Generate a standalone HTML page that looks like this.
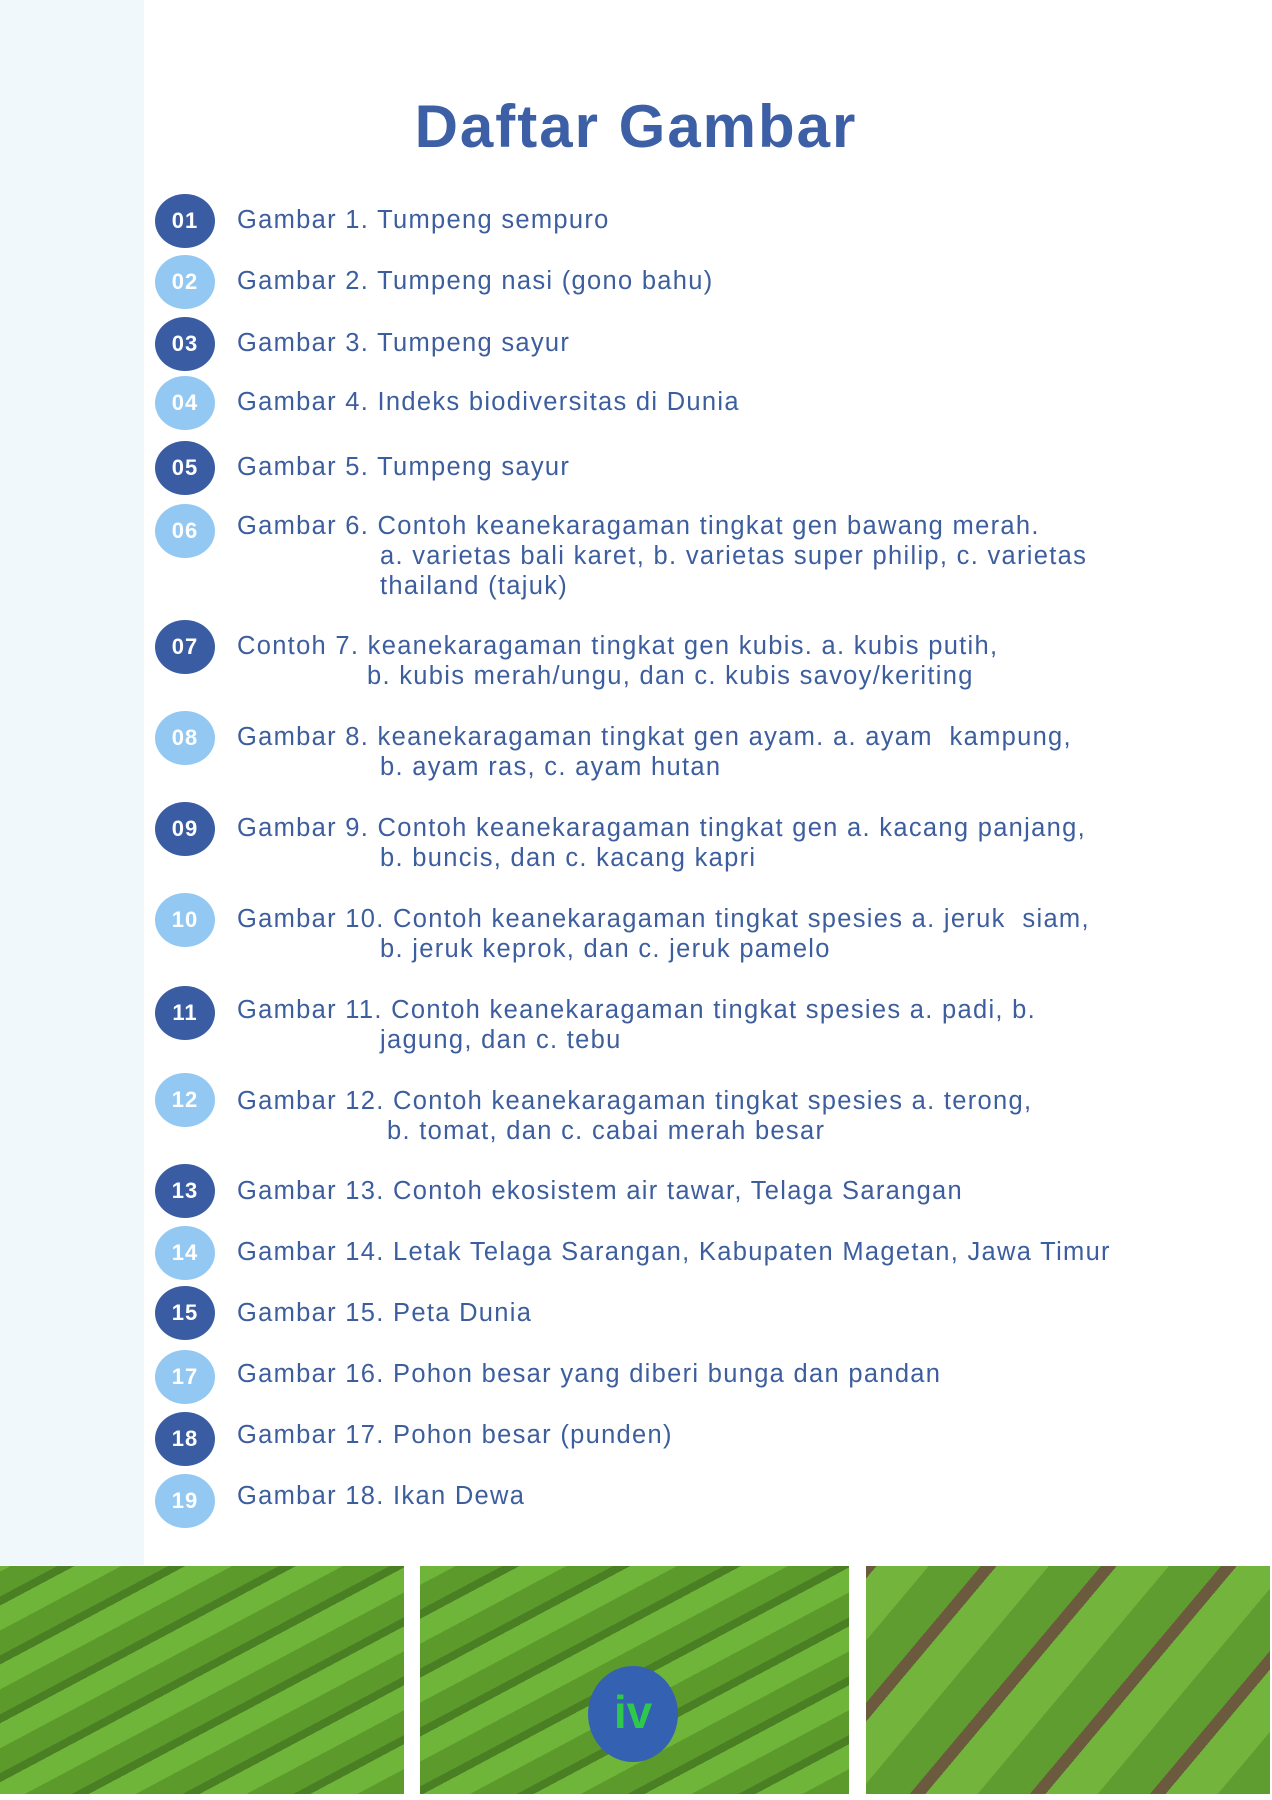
<!DOCTYPE html>
<html><head><meta charset="utf-8"><style>
body{margin:0;width:1272px;height:1800px;background:#fff;position:relative;overflow:hidden;font-family:"Liberation Sans",sans-serif;}
.side{position:absolute;left:0;top:0;width:144px;height:1565px;background:#f0f8fb;}
h1{position:absolute;left:0;width:1272px;top:92px;margin:0;text-align:center;font-size:60px;color:#3c5fa5;font-weight:bold;letter-spacing:2px;}
.c{position:absolute;left:155px;width:60px;height:54px;border-radius:50%;color:#fff;font-weight:bold;font-size:22px;text-align:center;line-height:54px;letter-spacing:1px;}
.d{background:#3a5ca3}.l{background:#93c8f3}
.t{position:absolute;left:237px;font-size:25.5px;line-height:30px;color:#3d5e9e;white-space:nowrap;letter-spacing:1.3px;}
.t span{display:block;}
.ph{position:absolute;top:1566px;height:228px;background:
repeating-linear-gradient(-28deg,#5c9a2c 0 22px,#6fb53a 22px 44px,#4a7f24 44px 52px);}
.badge{position:absolute;left:588px;top:1666px;width:90px;height:96px;border-radius:50%;background:#3561b2;color:#2ec84a;font-size:46px;font-weight:bold;text-align:center;line-height:92px;}
</style></head><body>
<div class="side"></div>
<h1>Daftar Gambar</h1>
<div class="c d" style="top:194px">01</div><div class="t" style="top:205px">Gambar 1. Tumpeng sempuro</div>
<div class="c l" style="top:255px">02</div><div class="t" style="top:266px">Gambar 2. Tumpeng nasi (gono bahu)</div>
<div class="c d" style="top:317px">03</div><div class="t" style="top:328px">Gambar 3. Tumpeng sayur</div>
<div class="c l" style="top:376px">04</div><div class="t" style="top:387px">Gambar 4. Indeks biodiversitas di Dunia</div>
<div class="c d" style="top:441px">05</div><div class="t" style="top:452px">Gambar 5. Tumpeng sayur</div>
<div class="c l" style="top:504px">06</div><div class="t" style="top:511px">Gambar 6. Contoh keanekaragaman tingkat gen bawang merah.<span style="padding-left:143px">a. varietas bali karet, b. varietas super philip, c. varietas</span><span style="padding-left:143px">thailand (tajuk)</span></div>
<div class="c d" style="top:620px">07</div><div class="t" style="top:631px">Contoh 7. keanekaragaman tingkat gen kubis. a. kubis putih,<span style="padding-left:130px">b. kubis merah/ungu, dan c. kubis savoy/keriting</span></div>
<div class="c l" style="top:711px">08</div><div class="t" style="top:722px">Gambar 8. keanekaragaman tingkat gen ayam. a. ayam &nbsp;kampung,<span style="padding-left:143px">b. ayam ras, c. ayam hutan</span></div>
<div class="c d" style="top:802px">09</div><div class="t" style="top:813px">Gambar 9. Contoh keanekaragaman tingkat gen a. kacang panjang,<span style="padding-left:143px">b. buncis, dan c. kacang kapri</span></div>
<div class="c l" style="top:893px">10</div><div class="t" style="top:904px">Gambar 10. Contoh keanekaragaman tingkat spesies a. jeruk &nbsp;siam,<span style="padding-left:143px">b. jeruk keprok, dan c. jeruk pamelo</span></div>
<div class="c d" style="top:986px">11</div><div class="t" style="top:995px">Gambar 11. Contoh keanekaragaman tingkat spesies a. padi, b.<span style="padding-left:143px">jagung, dan c. tebu</span></div>
<div class="c l" style="top:1073px">12</div><div class="t" style="top:1086px">Gambar 12. Contoh keanekaragaman tingkat spesies a. terong,<span style="padding-left:150px">b. tomat, dan c. cabai merah besar</span></div>
<div class="c d" style="top:1164px">13</div><div class="t" style="top:1176px">Gambar 13. Contoh ekosistem air tawar, Telaga Sarangan</div>
<div class="c l" style="top:1226px">14</div><div class="t" style="top:1237px">Gambar 14. Letak Telaga Sarangan, Kabupaten Magetan, Jawa Timur</div>
<div class="c d" style="top:1286px">15</div><div class="t" style="top:1298px">Gambar 15. Peta Dunia</div>
<div class="c l" style="top:1350px">17</div><div class="t" style="top:1359px">Gambar 16. Pohon besar yang diberi bunga dan pandan</div>
<div class="c d" style="top:1412px">18</div><div class="t" style="top:1420px">Gambar 17. Pohon besar (punden)</div>
<div class="c l" style="top:1474px">19</div><div class="t" style="top:1481px">Gambar 18. Ikan Dewa</div>
<div class="ph" style="left:0;width:404px"></div>
<div class="ph" style="left:420px;width:429px"></div>
<div class="ph" style="left:866px;width:404px;background:repeating-linear-gradient(-50deg,#5f9d30 0 40px,#72b43c 40px 80px,#6b5a3e 80px 92px)"></div>
<div class="badge">iv</div>
</body></html>
